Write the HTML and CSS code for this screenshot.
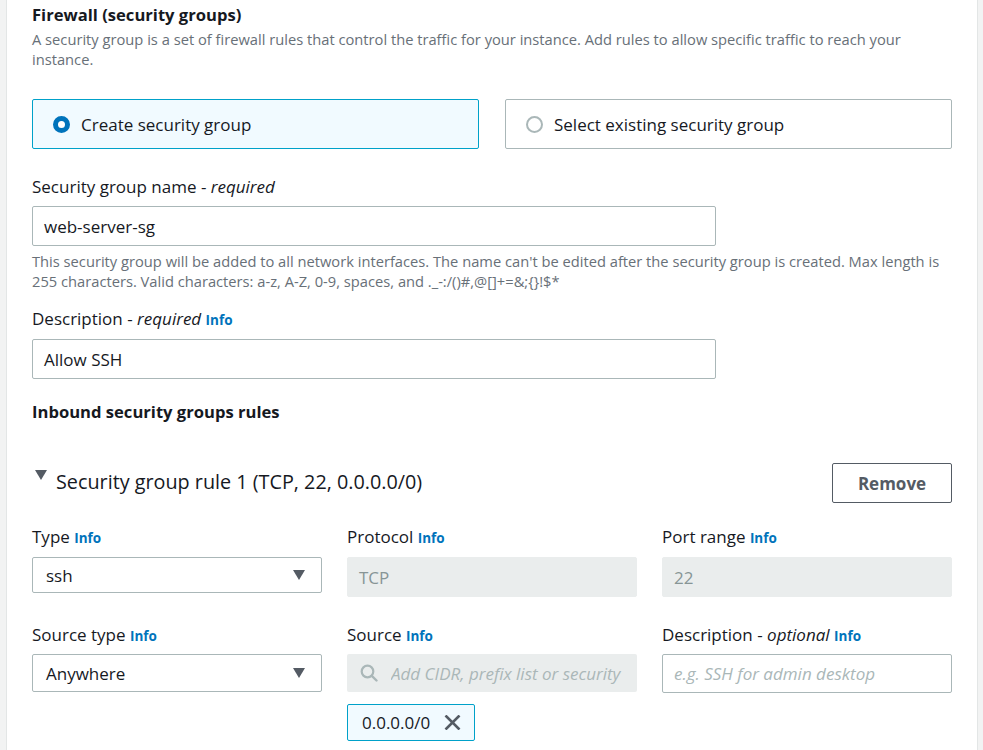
FILE: index.html
```html
<!DOCTYPE html>
<html>
<head>
<meta charset="utf-8">
<link rel="stylesheet" href="styles.css">
</head>
<body>
<div class="card">
  <h2 class="title">Firewall (security groups)</h2>
  <p class="desc">A security group is a set of firewall rules that control the traffic for your instance. Add rules to allow specific traffic to reach your instance.</p>

  <div class="tiles">
    <div class="tile tile-on">
      <span class="radio radio-on"></span>
      <span class="tile-text">Create security group</span>
    </div>
    <div class="tile">
      <span class="radio"></span>
      <span class="tile-text">Select existing security group</span>
    </div>
  </div>

  <div class="field f-name">
    <div class="label">Security group name - <i>required</i></div>
    <div class="input wide">web-server-sg</div>
    <div class="help">This security group will be added to all network interfaces. The name can't be edited after the security group is created. Max length is 255 characters. Valid characters: a-z, A-Z, 0-9, spaces, and ._-:/()#,@[]+=&amp;;{}!$*</div>
  </div>

  <div class="field f-desc">
    <div class="label">Description - <i>required</i> <span class="info">Info</span></div>
    <div class="input wide">Allow SSH</div>
  </div>

  <h3 class="subtitle">Inbound security groups rules</h3>

  <div class="rule-head">
    <div class="rule-title">
      <svg class="caret" width="12" height="10" viewBox="0 0 12 10"><path d="M0 0 H12 L6 10 Z" fill="#545b64"/></svg>
      <span>Security group rule 1 (TCP, 22, 0.0.0.0/0)</span>
    </div>
    <button class="btn">Remove</button>
  </div>

  <div class="grid">
    <div class="cell">
      <div class="label">Type <span class="info">Info</span></div>
      <div class="select"><span>ssh</span>
        <svg width="12" height="10" viewBox="0 0 12 10"><path d="M0 0 H12 L6 10 Z" fill="#545b64"/></svg>
      </div>
    </div>
    <div class="cell">
      <div class="label">Protocol <span class="info">Info</span></div>
      <div class="input disabled">TCP</div>
    </div>
    <div class="cell">
      <div class="label">Port range <span class="info">Info</span></div>
      <div class="input disabled">22</div>
    </div>

    <div class="cell row2">
      <div class="label">Source type <span class="info">Info</span></div>
      <div class="select s2"><span>Anywhere</span>
        <svg width="12" height="10" viewBox="0 0 12 10"><path d="M0 0 H12 L6 10 Z" fill="#545b64"/></svg>
      </div>
    </div>
    <div class="cell row2">
      <div class="label">Source <span class="info">Info</span></div>
      <div class="search">
        <svg width="18" height="18" viewBox="0 0 18 18"><circle cx="7.5" cy="7.5" r="5.8" fill="none" stroke="#aab7b8" stroke-width="2.2"/><path d="M11.8 11.8 L16.5 16.5" stroke="#aab7b8" stroke-width="2.4" stroke-linecap="round"/></svg>
        <span class="ph clip">Add CIDR, prefix list or security group</span>
      </div>
      <div class="token"><span>0.0.0.0/0</span>
        <svg width="17" height="15" viewBox="0 0 17 15"><path d="M1.5 0.5 L15.5 14.5 M15.5 0.5 L1.5 14.5" stroke="#545b64" stroke-width="2.6"/></svg>
      </div>
    </div>
    <div class="cell row2">
      <div class="label">Description - <i>optional</i> <span class="info">Info</span></div>
      <div class="input plain"><span class="ph">e.g. SSH for admin desktop</span></div>
    </div>
  </div>
</div>
</body>
</html>
```

FILE: styles.css
```css
* { box-sizing: border-box; }
html, body { margin: 0; padding: 0; }
body {
  background: #f2f3f3;
  font-family: "Open Sans", "Noto Sans", sans-serif;
  color: #16191f;
  width: 983px;
  height: 750px;
  overflow: hidden;
}
.card {
  margin-left: 6px;
  width: 972px;
  min-height: 750px;
  background: #fff;
  border-left: 1px solid #e3e6e6;
  border-right: 1px solid #e3e6e6;
  padding: 4px 25px 0 25px;
}
.title {
  margin: 0;
  font-size: 16.6px;
  font-weight: 700;
  line-height: 22px;
}
.desc {
  margin: 3px 0 0 0;
  font-size: 14.7px;
  line-height: 20px;
  color: #687078;
}
.tiles {
  display: flex;
  gap: 26px;
  margin-top: 30px;
}
.tile {
  flex: 1;
  height: 50px;
  border: 1px solid #aab7b8;
  border-radius: 2px;
  display: flex;
  align-items: center;
  padding-left: 20px;
  font-size: 17px;
}
.tile-on {
  border-color: #00a1c9;
  background: #f1faff;
}
.radio {
  width: 17px;
  height: 17px;
  border-radius: 50%;
  border: 2px solid #aab7b8;
  background: #fff;
  margin-right: 11px;
  flex: none;
}
.radio-on {
  border: 5px solid #0073bb;
}
.f-name { margin-top: 28px; }
.f-desc { margin-top: 18px; }
.label {
  font-size: 17px;
  line-height: 20px;
  margin-bottom: 9px;
  white-space: nowrap;
}
.row2 .label { margin-bottom: 8px; }
.label i { font-style: italic; }
.info {
  color: #0073bb;
  font-weight: 700;
  font-size: 13.5px;
}
.input {
  height: 40px;
  border: 1px solid #aab7b8;
  border-radius: 2px;
  display: flex;
  align-items: center;
  padding-left: 11px;
  font-size: 17px;
}
.wide { width: 684px; }
.help {
  margin-top: 5px;
  font-size: 14.7px;
  line-height: 20px;
  color: #687078;
}
.subtitle {
  margin: 23px 0 0 0;
  font-size: 16.6px;
  font-weight: 700;
  line-height: 20px;
}
.rule-head {
  margin-top: 41px;
  display: flex;
  justify-content: space-between;
  align-items: center;
}
.rule-title {
  display: flex;
  align-items: center;
  font-size: 19.8px;
  line-height: 24px;
  position: relative;
  top: -1px;
}
.caret {
  margin: 0 9px 0 3px;
  position: relative;
  top: -7px;
}
.btn {
  width: 120px;
  height: 40px;
  border: 1px solid #545b64;
  border-radius: 2px;
  background: #fff;
  color: #545b64;
  font-family: inherit;
  font-weight: 700;
  font-size: 17px;
}
.grid {
  display: grid;
  grid-template-columns: repeat(3, minmax(0, 1fr));
  column-gap: 25px;
  margin-top: 24px;
}
.cell { min-width: 0; }
.row2 { margin-top: 28px; }
.select {
  height: 36px;
  border: 1px solid #aab7b8;
  border-radius: 2px;
  display: flex;
  align-items: center;
  justify-content: space-between;
  padding: 0 16px 0 13px;
  font-size: 17px;
}
.s2 { height: 38px; }
.disabled {
  background: #eaeded;
  border-color: #eaeded;
  color: #879596;
}
.plain { height: 39px; }
.search {
  height: 38px;
  background: #eaeded;
  border-radius: 2px;
  display: flex;
  align-items: center;
  padding: 0 14px 0 13px;
  overflow: hidden;
  white-space: nowrap;
}
.search svg { flex: none; margin-right: 13px; }
.ph {
  font-style: italic;
  color: #aab7b8;
  font-size: 17px;
}
.clip {
  overflow: hidden;
  min-width: 0;
}
.token {
  margin-top: 12px;
  width: 128px;
  height: 37px;
  background: #f1faff;
  border: 1px solid #00a1c9;
  border-radius: 2px;
  display: flex;
  align-items: center;
  padding-left: 14px;
  font-size: 17px;
  gap: 14px;
}
```
